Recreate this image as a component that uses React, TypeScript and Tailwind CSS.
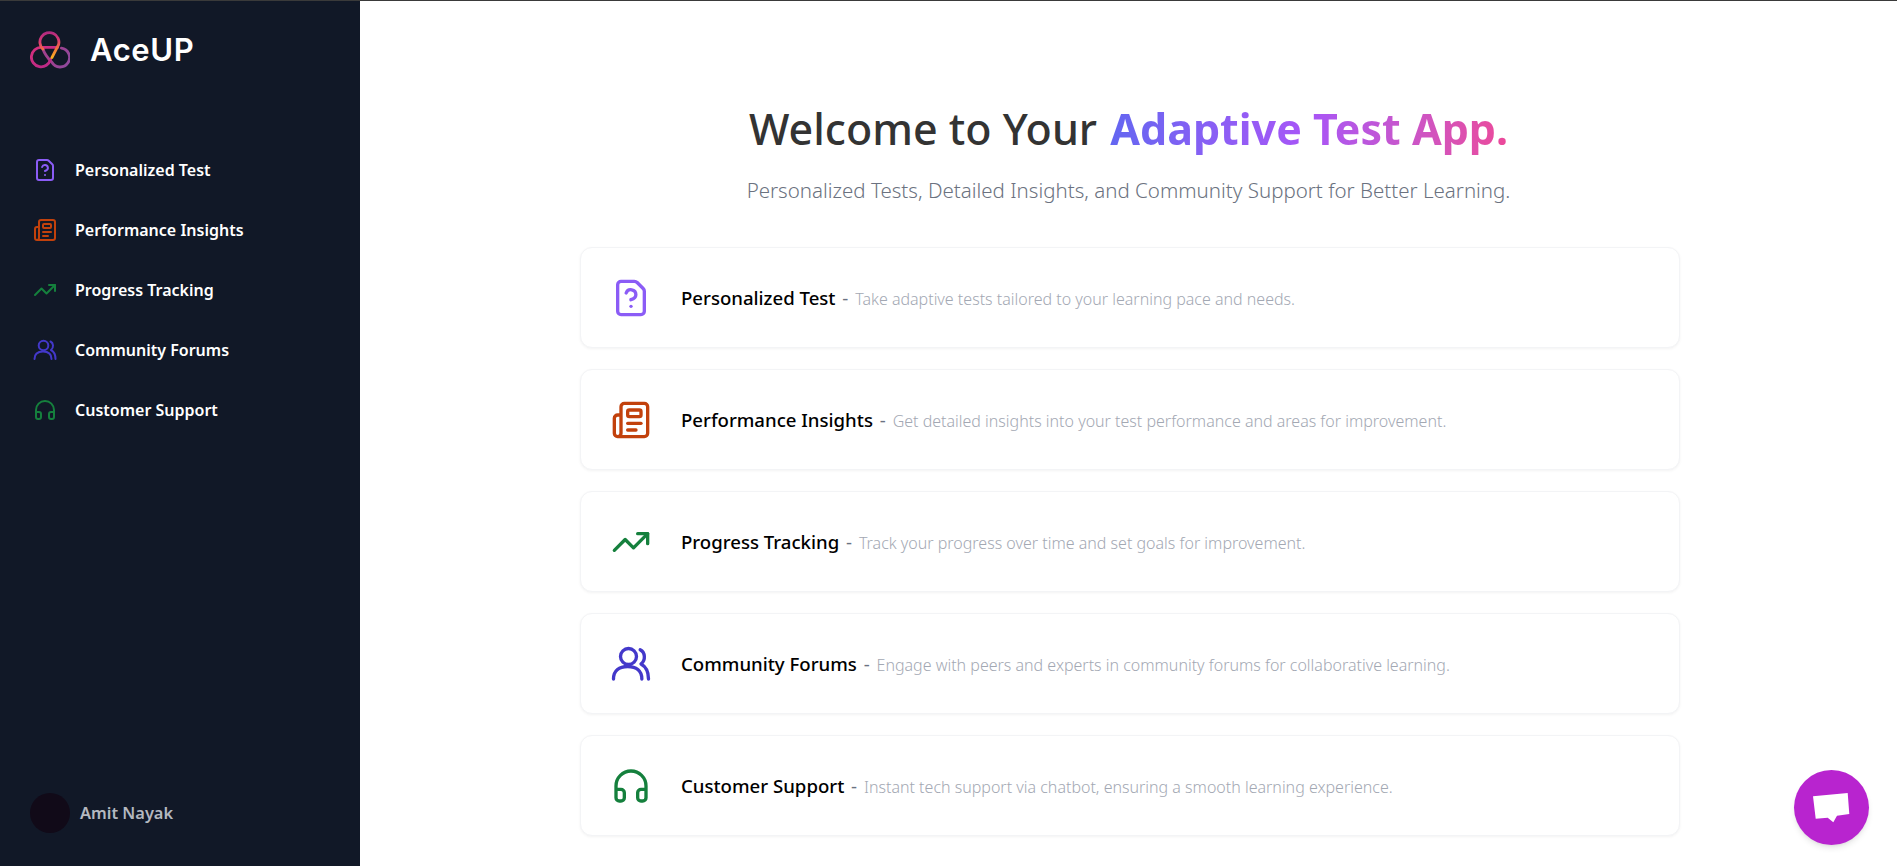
import { FileQuestion, Headphones, Newspaper, TrendingUp } from "lucide-react";

// lucide's Users has a different second figure, so this one is drawn by hand
const PeopleIcon = ({ className }: { className?: string }) => (
  <svg className={className} viewBox="0 0 24 24" fill="none" stroke="currentColor" strokeWidth="2" strokeLinecap="round" strokeLinejoin="round">
    <circle cx="10.5" cy="7.5" r="4.8" />
    <path d="M1.5 21 C1.5 16 5 13.5 10 13.5 C15 13.5 18.5 16 18.5 21" />
    <path d="M17.5 3.5 C20.5 5 21 9.5 18 12 C20.8 13.5 22.5 16.5 22.5 21" />
  </svg>
);

const features = [
  {
    title: "Personalized Test",
    text: "Take adaptive tests tailored to your learning pace and needs.",
    icon: FileQuestion,
    color: "text-[#8b5cf6]",
  },
  {
    title: "Performance Insights",
    text: "Get detailed insights into your test performance and areas for improvement.",
    icon: Newspaper,
    color: "text-[#c2410c]",
  },
  {
    title: "Progress Tracking",
    text: "Track your progress over time and set goals for improvement.",
    icon: TrendingUp,
    color: "text-[#15803d]",
  },
  {
    title: "Community Forums",
    text: "Engage with peers and experts in community forums for collaborative learning.",
    icon: PeopleIcon,
    color: "text-[#4338ca]",
  },
  {
    title: "Customer Support",
    text: "Instant tech support via chatbot, ensuring a smooth learning experience.",
    icon: Headphones,
    color: "text-[#15803d]",
  },
];

const Logo = () => (
  <svg width="40" height="38" viewBox="0 0 42 40" fill="none" strokeWidth="3" strokeLinecap="round">
    <defs>
      <linearGradient id="logoLeft" x1="0" y1="0" x2="1" y2="1">
        <stop offset="0%" stopColor="#d62f7c" />
        <stop offset="100%" stopColor="#b5288a" />
      </linearGradient>
      <linearGradient id="logoKnot" gradientUnits="userSpaceOnUse" x1="23" y1="28" x2="40" y2="38">
        <stop offset="0%" stopColor="#a0408f" />
        <stop offset="100%" stopColor="#8f4a9e" />
      </linearGradient>
      <linearGradient id="logoTop" gradientUnits="userSpaceOnUse" x1="23" y1="28" x2="20" y2="1">
        <stop offset="0%" stopColor="#fbb020" />
        <stop offset="35%" stopColor="#f0703f" />
        <stop offset="65%" stopColor="#d93a72" />
        <stop offset="100%" stopColor="#b02a80" />
      </linearGradient>
    </defs>
    <path d="M13.5 19 Q16 26 23 33 A10 10 0 1 0 33 18" stroke="url(#logoKnot)" />
    <path d="M29 17.3 H12 A10.2 10.2 0 1 0 21.5 30" stroke="url(#logoLeft)" />
    <path d="M23 28 L30 14.5 A10 10 0 1 0 13.5 19" stroke="url(#logoTop)" />
  </svg>
);

const App = () => {
  return (
    <div className="flex h-[866px] overflow-hidden bg-white border-t border-[#3a3a3a] font-['Noto_Sans',sans-serif]">
      <aside className="flex w-[360px] shrink-0 flex-col bg-[#111827] pb-[33px]">
        <div className="flex items-center gap-[20px] pl-[30px] pt-[30px]">
          <Logo />
          <span className="font-['Inter',sans-serif] text-[31px] leading-[38px] font-semibold tracking-[0.6px] text-white">AceUP</span>
        </div>
        <nav className="mt-[83px] flex flex-col gap-[24px] pl-[33px]">
          {features.map((item) => (
            <div key={item.title} className="flex h-9 items-center gap-[18px]">
              <item.icon className={`h-6 w-6 ${item.color}`} />
              <span className="text-base font-semibold text-white">{item.title}</span>
            </div>
          ))}
        </nav>
        <div className="mt-auto flex items-center gap-[10px] pl-[30px]">
          <div className="h-10 w-10 rounded-full bg-[#110a18]" />
          <span className="text-[16.4px] font-semibold text-[#b4b8c0]">Amit Nayak</span>
        </div>
      </aside>

      <main className="flex flex-1 flex-col items-center pt-[101px]">
        <h1 className="text-[43px] leading-[54px] font-medium text-[#333333]">
          Welcome to Your{" "}
          <span className="ml-[2px] bg-gradient-to-r from-[#6366f1] via-[#a855f7] to-[#ec4899] bg-clip-text font-bold text-transparent">
            Adaptive Test App.
          </span>
        </h1>
        <p className="mt-[20px] text-[20.5px] leading-7 font-light text-[#6b7280]">
          Personalized Tests, Detailed Insights, and Community Support for Better Learning.
        </p>
        <div className="mt-[43px] ml-[3px] flex w-[1100px] flex-col gap-[21px]">
          {features.map((item) => (
            <div
              key={item.title}
              className="flex h-[101px] items-center gap-[30px] rounded-xl border border-gray-100 bg-white pl-[30px] shadow-[0_1px_3px_rgba(0,0,0,0.05)]"
            >
              <item.icon className={`h-10 w-10 ${item.color}`} />
              <p className="text-[18.6px] font-medium text-black">
                {item.title} <span className="mx-[2px] font-normal text-gray-500">-</span>{" "}
                <span className="text-base font-light text-[#a3a8b3]">{item.text}</span>
              </p>
            </div>
          ))}
        </div>
      </main>

      <button className="fixed right-[28px] bottom-[21px] flex h-[75px] w-[75px] items-center justify-center rounded-full bg-[#b824cf] shadow-md">
        <svg width="37" height="30" viewBox="0 0 37 30" fill="white">
          <path d="M0 3.3 L34.7 0 L36.3 21 L24 22.7 L20.3 29.3 L14.7 24.7 L2.7 25.7 Z" />
        </svg>
      </button>
    </div>
  );
};

export default App;
